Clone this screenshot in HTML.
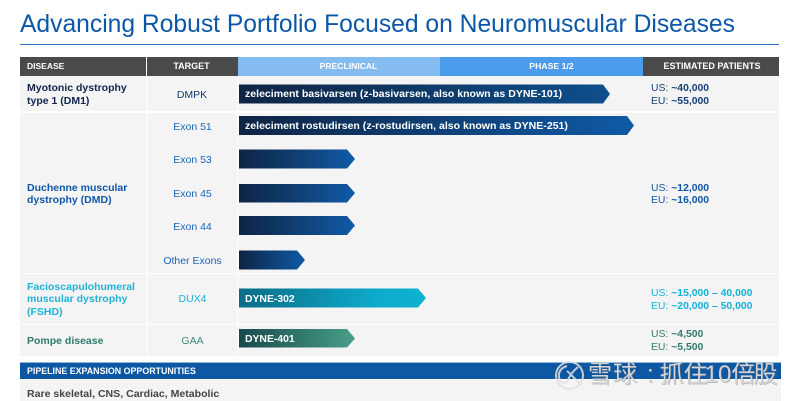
<!DOCTYPE html>
<html><head><meta charset="utf-8">
<style>
html,body{margin:0;padding:0;background:#fff}
#p{position:relative;width:800px;height:401px;overflow:hidden;background:#fff;font-family:"Liberation Sans",Arial,sans-serif}
#p div{position:absolute;white-space:nowrap}
.h{top:57px;height:19px;line-height:19px;font-size:9px;font-weight:bold;color:#fff;text-align:center}
.bg{background:#f4f4f5}
.d{left:27px;font-size:10.5px;line-height:12.7px;font-weight:bold}
.t{left:147px;width:91px;text-align:center;font-size:10.5px;line-height:13px}
.e{left:651px;font-size:10.4px;line-height:12.7px}
.e b{font-weight:bold}
.l{left:245px;color:#fff;font-weight:bold;font-size:10.55px;line-height:13px}
svg{position:absolute;left:0;top:0}
</style></head><body><div id="p">
<div style="left:20px;top:9px;font-size:24.65px;line-height:32px;color:#0b57a8">Advancing Robust Portfolio Focused on Neuromuscular Diseases</div>
<div style="left:20px;top:44px;width:759px;height:1px;background:#2b74c8"></div>

<div class="bg" style="left:20px;top:76px;width:759px;height:35px"></div>
<div class="bg" style="left:20px;top:112.5px;width:759px;height:160.5px"></div>
<div class="bg" style="left:20px;top:274px;width:759px;height:49.5px"></div>
<div class="bg" style="left:20px;top:324.5px;width:759px;height:31.5px"></div>
<div style="left:146px;top:76px;width:1.5px;height:280px;background:#fafafa"></div>
<div style="left:237px;top:76px;width:1.5px;height:280px;background:#fafafa"></div>

<div class="h" style="left:20px;width:126px;background:#4a4a4a;text-align:left;text-indent:7px;font-size:8.5px">DISEASE</div>
<div class="h" style="left:147px;width:91px;background:#4a4a4a;text-indent:-2px">TARGET</div>
<div class="h" style="left:238px;width:202px;background:#85bcf0;font-size:8.6px;text-indent:19px">PRECLINICAL</div>
<div class="h" style="left:440px;width:203px;background:#4b9cea;font-size:8.7px;text-indent:20px">PHASE 1/2</div>
<div class="h" style="left:643px;width:136px;background:#4a4a4a;text-indent:2px">ESTIMATED PATIENTS</div>

<svg width="800" height="401">
<defs>
<linearGradient id="a" x1="0" x2="1" y1="0" y2="0"><stop offset="0" stop-color="#0f2444"/><stop offset="1" stop-color="#0f5aa6"/></linearGradient>
<linearGradient id="a2" x1="0" x2="1" y1="0" y2="0"><stop offset="0" stop-color="#0f2444"/><stop offset="1" stop-color="#0e4f8c"/></linearGradient>
<linearGradient id="b" x1="0" x2="1" y1="0" y2="0"><stop offset="0" stop-color="#0b6b86"/><stop offset=".75" stop-color="#0eaccc"/><stop offset="1" stop-color="#0eb2d0"/></linearGradient>
<linearGradient id="c" x1="0" x2="1" y1="0" y2="0"><stop offset="0" stop-color="#174a4d"/><stop offset="1" stop-color="#4a9f88"/></linearGradient>
</defs>
<polygon fill="url(#a2)" points="239,84.5 603,84.5 610,94 603,103.5 239,103.5"/>
<polygon fill="url(#a)" points="239,116 627,116 634,125.5 627,135 239,135"/>
<polygon fill="url(#a)" points="239,149.5 347,149.5 355,159 347,168.5 239,168.5"/>
<polygon fill="url(#a)" points="239,184 347,184 355,193 347,202.5 239,202.5"/>
<polygon fill="url(#a)" points="239,216 347,216 355,225.5 347,235 239,235"/>
<polygon fill="url(#a)" points="239,250.5 297,250.5 305,260 297,269.5 239,269.5"/>
<polygon fill="url(#b)" points="239,288.5 418,288.5 426,298 418,307.5 239,307.5"/>
<polygon fill="url(#c)" points="239,329 347,329 355,338.5 347,347.5 239,347.5"/>
</svg>

<div class="l" style="top:88px">zeleciment basivarsen (z-basivarsen, also known as DYNE-101)</div>
<div class="l" style="top:120px">zeleciment rostudirsen (z-rostudirsen, also known as DYNE-251)</div>
<div class="l" style="top:292.5px;font-size:10.4px">DYNE-302</div>
<div class="l" style="top:332.5px;font-size:10.4px">DYNE-401</div>

<div class="d" style="top:82px;color:#10254a">Myotonic dystrophy<br>type 1 (DM1)</div>
<div class="d" style="top:181.5px;color:#0f57a6">Duchenne muscular<br>dystrophy (DMD)</div>
<div class="d" style="top:280.5px;color:#1cb4d6">Facioscapulohumeral<br>muscular dystrophy<br>(FSHD)</div>
<div class="d" style="top:334.5px;color:#2f7a6b">Pompe disease</div>

<div class="t" style="top:88.5px;color:#173a6b;text-indent:-1px">DMPK</div>
<div class="t" style="top:120.5px;color:#1a66b5">Exon 51</div>
<div class="t" style="top:153.5px;color:#1a66b5">Exon 53</div>
<div class="t" style="top:187.5px;color:#1a66b5">Exon 45</div>
<div class="t" style="top:220.5px;color:#1a66b5">Exon 44</div>
<div class="t" style="top:254.5px;color:#1a66b5">Other Exons</div>
<div class="t" style="top:292.5px;color:#1cb4d6">DUX4</div>
<div class="t" style="top:334.5px;color:#3f8a7a">GAA</div>

<div class="e" style="top:83px;color:#173f75">US: <b>~40,000</b><br>EU: <b>~55,000</b></div>
<div class="e" style="top:182.5px;color:#0f57a6">US: <b>~12,000</b><br>EU: <b>~16,000</b></div>
<div class="e" style="top:288px;color:#12b2d6">US: <b>~15,000 – 40,000</b><br>EU: <b>~20,000 – 50,000</b></div>
<div class="e" style="top:329px;color:#2f7a6b">US: <b>~4,500</b><br>EU: <b>~5,500</b></div>

<div style="left:20px;top:362px;width:761px;height:1px;background:#8db6dd"></div>
<div style="left:20px;top:363px;width:761px;height:16px;line-height:16px;background:#0e57a3;color:#fff;font-size:8.85px;font-weight:bold;text-indent:7px">PIPELINE EXPANSION OPPORTUNITIES</div>
<div class="bg" style="left:20px;top:380px;width:761px;height:21px"></div>
<div style="left:27px;top:387px;font-size:10.55px;line-height:14px;font-weight:bold;color:#444">Rare skeletal, CNS, Cardiac, Metabolic</div>

<svg width="800" height="401" style="opacity:.85">
<circle cx="569.5" cy="375.5" r="13.5" fill="none" stroke="#e2e2e2" stroke-width="2"/>
<path d="M567 366 C560 368 557 374 560 380 C562 384 566 384 568 380 C570 375 573 371 578 367 M567 371 C571 374 575 380 580 383" fill="none" stroke="#e2e2e2" stroke-width="2"/>
</svg>
<div style="left:588px;top:359px;font-size:24px;line-height:32px;color:#d4d4d4;font-family:'Liberation Sans','Noto Sans CJK SC',sans-serif;text-shadow:1px 1px 0 rgba(110,110,110,.4)">雪<span style="margin-left:1px">球</span><span style="margin-left:10px">:</span><span style="margin-left:6px">抓</span><span>住</span><span style="margin-left:-3px">10</span><span>倍</span><span style="margin-left:-2px">股</span></div>
</div></body></html>
